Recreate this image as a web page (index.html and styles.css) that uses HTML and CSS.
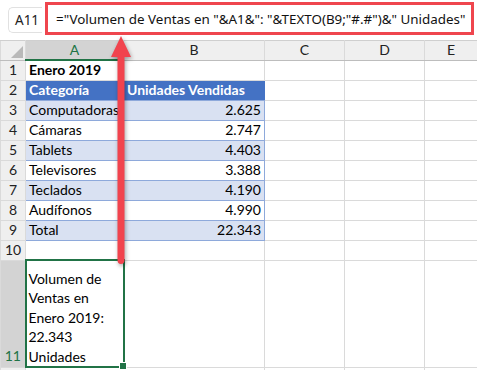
FILE: index.html
```html
<!DOCTYPE html>
<html lang="es">
<head>
    <meta charset="UTF-8">
    <title>Volumen de Ventas</title>
    <link rel="stylesheet" href="styles.css">
</head>
<body>
    <div class="app">
        <div class="fbar">
            <div class="namebox">A11</div>
            <div class="formula">="Volumen de Ventas en "&amp;A1&amp;": "&amp;TEXTO(B9;"#.#")&amp;" Unidades"</div>
        </div>
        <table class="sheet">
            <colgroup>
                <col style="width:25px">
                <col style="width:98px">
                <col style="width:141px">
                <col style="width:80px">
                <col style="width:80px">
                <col style="width:53px">
            </colgroup>
            <tr class="colhead">
                <th class="corner"><span class="tri"></span></th>
                <th class="sel">A</th>
                <th>B</th>
                <th>C</th>
                <th>D</th>
                <th>E</th>
            </tr>
            <tr>
                <th>1</th>
                <td class="title">Enero 2019</td>
                <td></td><td></td><td></td><td></td>
            </tr>
            <tr class="thead">
                <th>2</th>
                <td class="t">Categoría</td>
                <td class="t last">Unidades Vendidas</td>
                <td></td><td></td><td></td>
            </tr>
            <tr class="band">
                <th>3</th>
                <td class="t">Computadoras</td>
                <td class="t last num">2.625</td>
                <td></td><td></td><td></td>
            </tr>
            <tr>
                <th>4</th>
                <td class="t">Cámaras</td>
                <td class="t last num">2.747</td>
                <td></td><td></td><td></td>
            </tr>
            <tr class="band">
                <th>5</th>
                <td class="t">Tablets</td>
                <td class="t last num">4.403</td>
                <td></td><td></td><td></td>
            </tr>
            <tr>
                <th>6</th>
                <td class="t">Televisores</td>
                <td class="t last num">3.388</td>
                <td></td><td></td><td></td>
            </tr>
            <tr class="band">
                <th>7</th>
                <td class="t">Teclados</td>
                <td class="t last num">4.190</td>
                <td></td><td></td><td></td>
            </tr>
            <tr>
                <th>8</th>
                <td class="t">Audífonos</td>
                <td class="t last num">4.990</td>
                <td></td><td></td><td></td>
            </tr>
            <tr class="band">
                <th>9</th>
                <td class="t">Total</td>
                <td class="t last num">22.343</td>
                <td></td><td></td><td></td>
            </tr>
            <tr>
                <th>10</th>
                <td></td><td></td><td></td><td></td><td></td>
            </tr>
            <tr class="tall">
                <th class="sel">11</th>
                <td class="active">Volumen de<br>Ventas en<br>Enero 2019:<br>22.343<br>Unidades<span class="handle"></span></td>
                <td></td><td></td><td></td><td></td>
            </tr>
            <tr>
                <th></th>
                <td></td><td></td><td></td><td></td><td></td>
            </tr>
        </table>

        <svg class="arrow" width="30" height="236" viewBox="0 0 30 236">
            <path d="M15 2 L25 23 L18.5 23 L18.5 226 Q18.5 230 15 230 Q11.5 230 11.5 226 L11.5 23 L5 23 Z" fill="#f1434d"/>
        </svg>
    </div>
</body>
</html>
```

FILE: styles.css
```css
body, html {
    margin: 0;
    padding: 0;
    background-color: #ffffff;
}
.app {
    position: relative;
    width: 477px;
    height: 370px;
    overflow: hidden;
    font-family: Lato, 'Liberation Sans', sans-serif;
    font-size: 14px;
    color: #000000;
}
.fbar {
    display: flex;
    align-items: center;
    gap: 3px;
    height: 40px;
    padding: 0 3px 0 8px;
    box-sizing: border-box;
    background-color: #ffffff;
}
.namebox {
    width: 34px;
    height: 26px;
    box-sizing: border-box;
    border: 1px solid #e1e1e1;
    border-right: none;
    border-radius: 5px 0 0 5px;
    display: flex;
    align-items: center;
    padding-left: 6px;
    font-family: 'Noto Sans', sans-serif;
    font-size: 13.5px;
    color: #222222;
}
.formula {
    flex: 1;
    height: 33px;
    margin-bottom: 3px;
    box-sizing: border-box;
    border: 3px solid #ef464e;
    background-color: #ffffff;
    display: flex;
    align-items: center;
    padding-left: 8px;
    font-family: 'Noto Sans', sans-serif;
    font-size: 13.4px;
    white-space: nowrap;
    color: #111111;
}
.sheet {
    border-collapse: collapse;
    table-layout: fixed;
    width: 477px;
}
.sheet th, .sheet td {
    border: 1px solid #dadada;
    height: 20px;
    padding: 0 3px;
    box-sizing: border-box;
    white-space: nowrap;
    overflow: visible;
    line-height: 18px;
}
.sheet th {
    background-color: #efefef;
    font-weight: normal;
    color: #222222;
    text-align: center;
    padding: 0;
}
.colhead th {
    height: 18px;
    border-top: 1px solid #cfcfcf;
    border-bottom: 1px solid #bdbdbd;
}
.sheet th.sel {
    background-color: #d3d3d3;
    color: #217346;
}
.colhead th.sel {
    border-bottom: 2px solid #217346;
}
.corner {
    position: relative;
}
.tri {
    position: absolute;
    right: 2px;
    bottom: 2px;
    width: 0;
    height: 0;
    border-left: 12px solid transparent;
    border-bottom: 12px solid #b9b9b9;
}
.title {
    font-weight: bold;
}
.thead td.t {
    background-color: #4472c4;
    color: #ffffff;
    font-weight: bold;
    border-top-color: #4472c4;
    border-left-color: #4472c4;
}
.thead td.t.last {
    border-right-color: #4472c4;
}
.band td.t {
    background-color: #d9e1f2;
}
td.t {
    border-bottom: 1px solid #8ea9db;
    border-left-color: transparent;
}
td.t.last {
    border-right: 1px solid #8ea9db;
}
.sheet th + td.t {
    border-left-color: #dadada;
}
.num {
    text-align: right;
}
.tall td, .tall th {
    height: 107px;
    vertical-align: bottom;
    line-height: 19.5px;
}
.tall th {
    padding-bottom: 1px;
}
td.active {
    position: relative;
    border: 2px solid #217346;
    padding: 0 2px 0 2px;
}
.handle {
    position: absolute;
    right: -4px;
    bottom: -4px;
    width: 6px;
    height: 6px;
    background-color: #217346;
    border: 1px solid #ffffff;
}
.arrow {
    position: absolute;
    left: 106px;
    top: 34px;
    filter: drop-shadow(1px 2px 2px rgba(0, 0, 0, 0.35));
}
```
